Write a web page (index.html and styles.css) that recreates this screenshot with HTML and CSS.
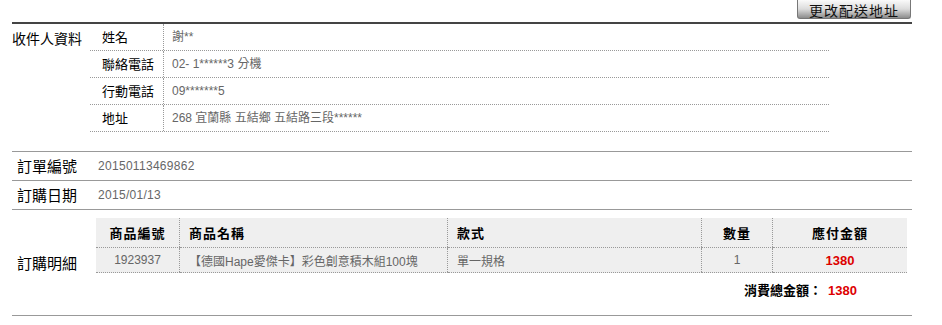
FILE: index.html
```html
<!DOCTYPE html>
<html lang="zh-Hant">
<head>
<meta charset="UTF-8">
<meta name="viewport" content="width=device-width, initial-scale=1.0">
<title>訂單明細</title>
<link rel="stylesheet" href="styles.css">
</head>
<body>
<div class="page">
    <div class="topbar">
        <button class="btn-change">更改配送地址</button>
    </div>

    <div class="row row-receiver">
        <div class="row-label">收件人資料</div>
        <div class="receiver">
            <div class="info-row">
                <div class="info-label">姓名</div>
                <div class="info-value">謝**</div>
            </div>
            <div class="info-row">
                <div class="info-label">聯絡電話</div>
                <div class="info-value">02- 1******3 分機</div>
            </div>
            <div class="info-row">
                <div class="info-label">行動電話</div>
                <div class="info-value">09*******5</div>
            </div>
            <div class="info-row">
                <div class="info-label">地址</div>
                <div class="info-value">268 宜蘭縣 五結鄉 五結路三段******</div>
            </div>
        </div>
    </div>

    <div class="row row-simple">
        <div class="row-label">訂單編號</div>
        <div class="row-value">20150113469862</div>
    </div>
    <div class="row row-simple">
        <div class="row-label">訂購日期</div>
        <div class="row-value">2015/01/13</div>
    </div>

    <div class="row row-detail">
        <div class="row-label">訂購明細</div>
        <div class="detail">
            <table class="items">
                <thead>
                    <tr>
                        <th class="col-no">商品編號</th>
                        <th class="col-name left">商品名稱</th>
                        <th class="col-spec left">款式</th>
                        <th class="col-qty">數量</th>
                        <th class="col-price">應付金額</th>
                    </tr>
                </thead>
                <tbody>
                    <tr>
                        <td>1923937</td>
                        <td class="left">【德國Hape愛傑卡】彩色創意積木組100塊</td>
                        <td class="left">單一規格</td>
                        <td>1</td>
                        <td class="price">1380</td>
                    </tr>
                </tbody>
            </table>
            <div class="total">消費總金額：<span class="price">1380</span></div>
        </div>
    </div>
</div>
</body>
</html>
```

FILE: styles.css
```css
body {
    margin: 0;
    padding: 0;
    background-color: #fff;
    color: #000;
    font-family: 'Liberation Sans', 'Noto Sans CJK TC', sans-serif;
}
.page {
    width: 900px;
    margin-left: 12px;
}
.topbar {
    height: 22px;
    display: flex;
    justify-content: flex-end;
    align-items: flex-start;
    border-bottom: 2px solid #444;
}
.btn-change {
    width: 114px;
    height: 19px;
    margin-right: 1px;
    padding: 2px 0 0;
    overflow: visible;
    font-family: 'Noto Sans CJK TC', sans-serif;
    font-size: 14px;
    line-height: 16px;
    letter-spacing: 1px;
    color: #111;
    border: 1px solid #777;
    border-top: none;
    border-radius: 0 0 3px 3px;
    background: linear-gradient(#fafafa, #dcdcdc 50%, #8c8c8c);
}
.row {
    display: grid;
    border-bottom: 1px solid #999;
}
.row-label {
    font-family: 'Noto Sans CJK TC', sans-serif;
    font-size: 15px;
    line-height: 18px;
}
.row-receiver {
    grid-template-columns: 78px 739px;
    padding-bottom: 19px;
}
.row-receiver .row-label {
    font-size: 14px;
    padding-top: 5px;
}
.info-row {
    display: grid;
    grid-template-columns: 73px 1fr;
    height: 26px;
    border-bottom: 1px dotted #999;
}
.info-label {
    padding-left: 12px;
    font-family: 'Noto Sans CJK TC', sans-serif;
    font-size: 13px;
    line-height: 26px;
}
.info-value {
    border-left: 1px dotted #999;
    padding-left: 8px;
    font-size: 12px;
    line-height: 26px;
    color: #666;
}
.row-simple {
    grid-template-columns: 86px 1fr;
    height: 28px;
    align-items: center;
}
.row-simple .row-label,
.row-detail .row-label {
    padding-left: 5px;
}
.row-value {
    font-size: 12px;
    color: #666;
    letter-spacing: 0.3px;
}
.row-detail {
    grid-template-columns: 84px 1fr;
    align-items: center;
    height: 105px;
}
.detail {
    align-self: start;
    padding-top: 8px;
}
.items {
    border-collapse: collapse;
    width: 811px;
    background-color: #efefef;
}
.items th,
.items td {
    padding: 0;
    text-align: center;
    border-left: 1px dotted #999;
    border-bottom: 1px dotted #999;
}
.items th:first-child,
.items td:first-child {
    border-left: none;
}
.items th {
    height: 29px;
    font-family: 'Noto Sans CJK TC', sans-serif;
    font-size: 13px;
    font-weight: bold;
    letter-spacing: 1px;
}
.items td {
    height: 24px;
    font-size: 12px;
    color: #666;
}
.items .left {
    text-align: left;
    padding-left: 9px;
}
.col-no { width: 83px; }
.col-name { width: 258px; }
.col-spec { width: 244px; }
.col-qty { width: 70px; }
.items .price,
.total .price {
    color: #d00;
    font-size: 13px;
    font-weight: bold;
}
.total {
    text-align: right;
    padding-right: 55px;
    padding-top: 7px;
    font-size: 13px;
    font-weight: bold;
}
.total .price {
    margin-left: 6px;
}
```
